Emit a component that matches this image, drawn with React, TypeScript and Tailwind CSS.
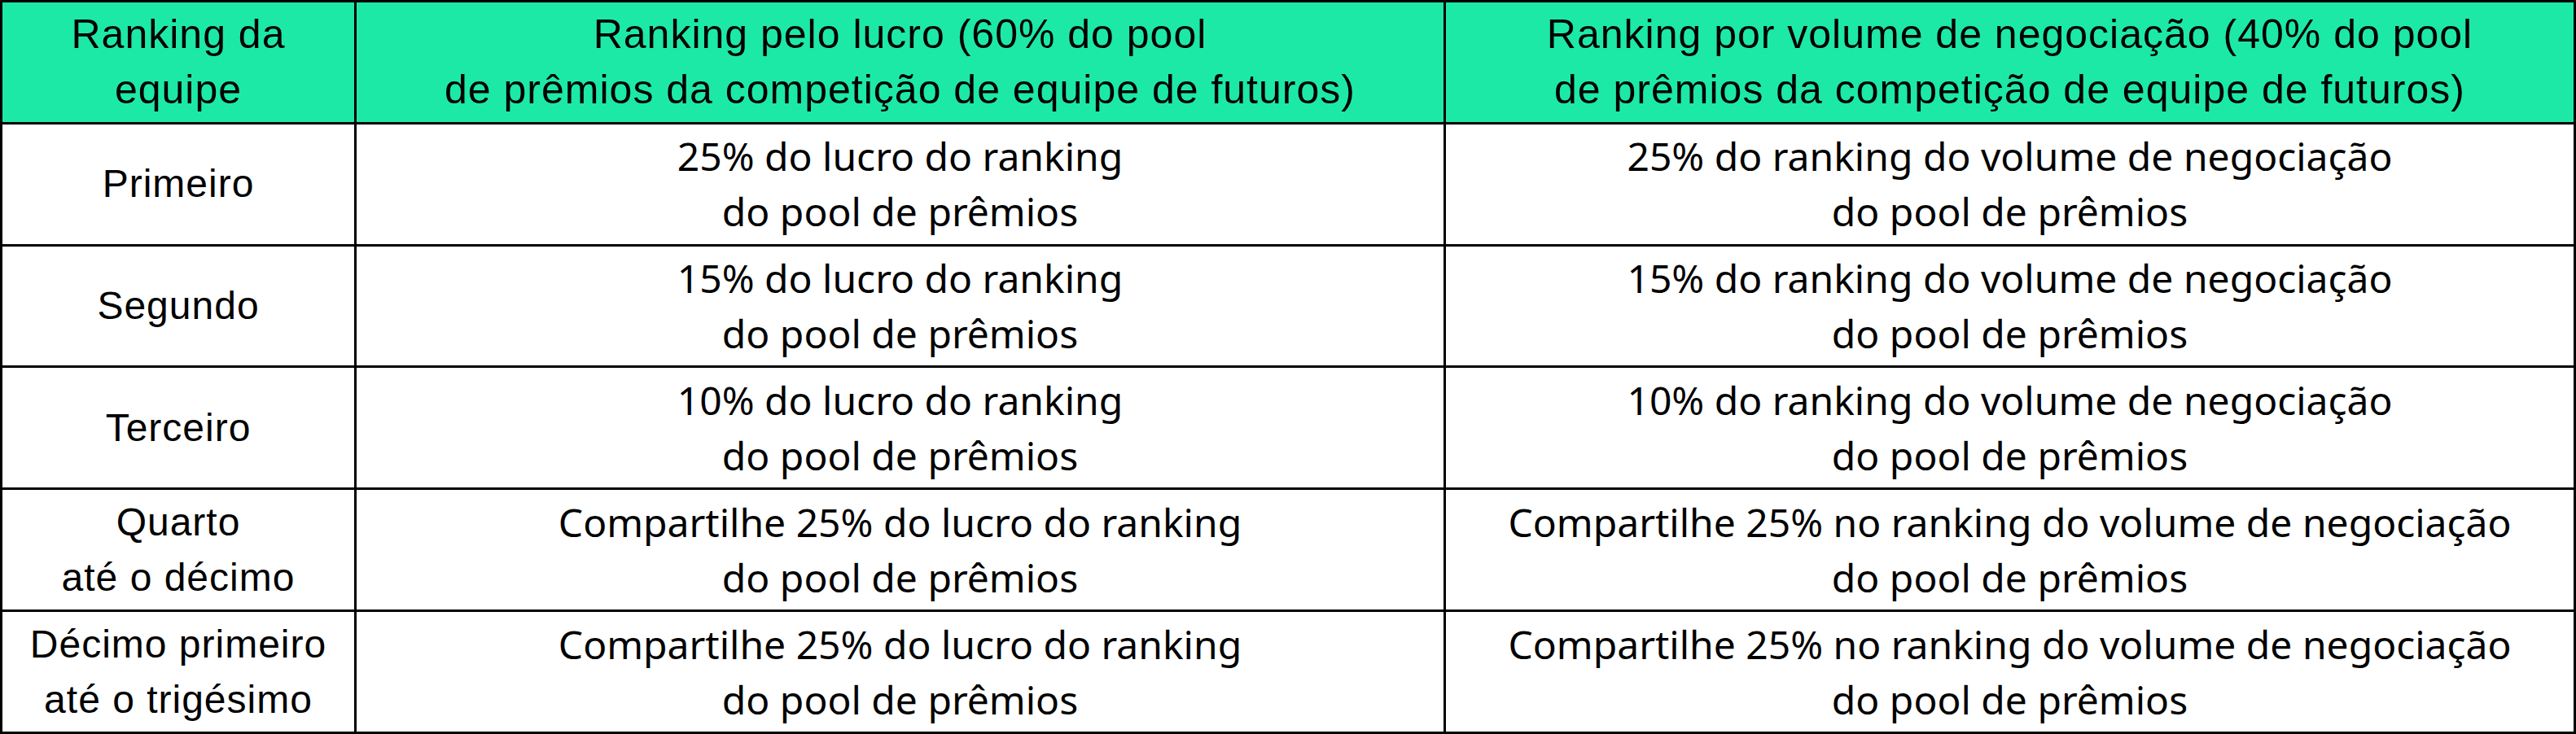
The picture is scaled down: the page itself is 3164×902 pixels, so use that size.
import React from 'react';

const rows = [
  { rank: ['Primeiro'], profit: '25% do lucro do ranking', volume: '25% do ranking do volume de negociação' },
  { rank: ['Segundo'], profit: '15% do lucro do ranking', volume: '15% do ranking do volume de negociação' },
  { rank: ['Terceiro'], profit: '10% do lucro do ranking', volume: '10% do ranking do volume de negociação' },
  { rank: ['Quarto', 'até o décimo'], profit: 'Compartilhe 25% do lucro do ranking', volume: 'Compartilhe 25% no ranking do volume de negociação' },
  { rank: ['Décimo primeiro', 'até o trigésimo'], profit: 'Compartilhe 25% do lucro do ranking', volume: 'Compartilhe 25% no ranking do volume de negociação' },
];

type Kind = 'head' | 'rank' | 'body';

const kindClass: Record<Kind, string> = {
  head: "bg-[#1de9a6] font-['Liberation_Sans',Arial,sans-serif] text-[50px] tracking-[1px]",
  rank: "bg-white font-['Liberation_Sans',Arial,sans-serif] text-[48px] tracking-[1px]",
  body: "bg-white font-['Noto_Sans',sans-serif] text-[48px]",
};

const Cell: React.FC<{ lines: string[]; kind: Kind }> = ({ lines, kind }) => (
  <div className={`flex flex-col items-center justify-center text-center text-black leading-[68px] ${kindClass[kind]}`}>
    {lines.map((l, i) => (
      <span key={i} className="whitespace-nowrap">{l}</span>
    ))}
  </div>
);

export default function App() {
  return (
    <div className="w-[3164px] h-[902px] bg-black p-[3px] grid grid-cols-[432px_1335px_1fr] grid-rows-6 gap-[3px]">
      <Cell kind="head" lines={['Ranking da', 'equipe']} />
      <Cell kind="head" lines={['Ranking pelo lucro (60% do pool', 'de prêmios da competição de equipe de futuros)']} />
      <Cell kind="head" lines={['Ranking por volume de negociação (40% do pool', 'de prêmios da competição de equipe de futuros)']} />
      {rows.map((r, i) => (
        <React.Fragment key={i}>
          <Cell kind="rank" lines={r.rank} />
          <Cell kind="body" lines={[r.profit, 'do pool de prêmios']} />
          <Cell kind="body" lines={[r.volume, 'do pool de prêmios']} />
        </React.Fragment>
      ))}
    </div>
  );
}
